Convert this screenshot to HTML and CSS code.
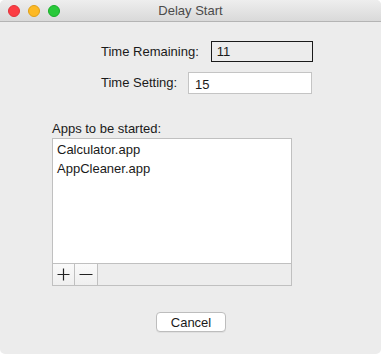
FILE: index.html
```html
<!DOCTYPE html>
<html>
<head>
<meta charset="utf-8">
<link rel="stylesheet" href="styles.css">
</head>
<body>
<div class="window">
  <div class="titlebar">
    <div class="lights">
      <span class="light red"></span>
      <span class="light yellow"></span>
      <span class="light green"></span>
    </div>
    <div class="title">Delay Start</div>
  </div>
  <div class="content">
    <div class="fields">
      <div class="row">
        <span class="label">Time Remaining:</span>
        <div class="field readonly">11</div>
      </div>
      <div class="row">
        <span class="label">Time Setting:</span>
        <div class="field editable">15</div>
      </div>
    </div>
    <div class="apps">
      <div class="apps-label">Apps to be started:</div>
      <div class="list">
        <div class="items">
          <div class="item">Calculator.app</div>
          <div class="item">AppCleaner.app</div>
        </div>
        <div class="toolbar">
          <button class="tbtn plus"><svg width="13" height="13" viewBox="0 0 13 13"><path d="M6.5 0.5v12M0.5 6.5h12" stroke="#222" stroke-width="1.2" fill="none"/></svg></button>
          <button class="tbtn minus"><svg width="14" height="13" viewBox="0 0 14 13"><path d="M0.5 6.5h13" stroke="#222" stroke-width="1.2" fill="none"/></svg></button>
          <div class="tfill"></div>
        </div>
      </div>
    </div>
    <div class="actions">
      <button class="cancel">Cancel</button>
    </div>
  </div>
</div>
</body>
</html>
```
FILE: styles.css
```css
html, body {
  margin: 0;
  padding: 0;
  background: #ffffff;
}
body {
  font-family: "Liberation Sans", Arial, sans-serif;
  font-size: 13px;
  color: #1a1a1a;
}
.window {
  width: 381px;
  height: 354px;
  background: #ececec;
  border-radius: 5px;
  overflow: hidden;
  display: flex;
  flex-direction: column;
}
.titlebar {
  height: 21px;
  border-bottom: 1px solid #b4b4b4;
  background: linear-gradient(#eeeeee, #d9d9d9);
  position: relative;
  display: flex;
  align-items: center;
  justify-content: center;
  flex-shrink: 0;
}
.lights {
  position: absolute;
  left: 8px;
  top: 5px;
  display: flex;
  gap: 8px;
}
.light {
  width: 12px;
  height: 12px;
  border-radius: 50%;
  box-sizing: border-box;
}
.red { background: #fc3d44; border: 1px solid #e0333a; }
.yellow { background: #fdb924; border: 1px solid #de9f17; }
.green { background: #29c93a; border: 1px solid #18ad29; }
.title {
  color: #4b4b4b;
  font-size: 13px;
  line-height: 21px;
}
.content {
  display: flex;
  flex-direction: column;
  padding-top: 19px;
}
.fields {
  padding-left: 101px;
  display: flex;
  flex-direction: column;
  gap: 10px;
}
.row {
  display: flex;
  align-items: center;
  gap: 11px;
}
.label {
  line-height: 16px;
}
.field {
  box-sizing: border-box;
  height: 21px;
  line-height: 19px;
  padding-left: 5px;
}
.readonly {
  width: 102px;
  border: 1px solid #1a1a1a;
  background: #ececec;
  margin-left: 1px;
}
.editable {
  width: 124px;
  height: 22px;
  line-height: 22px;
  border: 1px solid #c4c4c4;
  background: #ffffff;
  padding-left: 6px;
  padding-top: 1px;
}
.apps {
  padding-left: 52px;
  margin-top: 27px;
}
.apps-label {
  line-height: 16px;
  margin-bottom: 1px;
}
.list {
  width: 240px;
  height: 148px;
  box-sizing: border-box;
  border: 1px solid #c0c0c0;
  background: #ffffff;
  display: flex;
  flex-direction: column;
}
.items {
  flex: 1;
  padding-top: 1px;
  padding-left: 4px;
}
.item {
  line-height: 19px;
}
.toolbar {
  height: 21px;
  border-top: 1px solid #c0c0c0;
  background: #ededed;
  display: flex;
}
.tbtn {
  margin: 0;
  padding: 0;
  border: none;
  border-right: 1px solid #c0c0c0;
  background: linear-gradient(#fafafa, #efefef);
  display: flex;
  align-items: center;
  justify-content: center;
  height: 21px;
}
.plus { width: 22px; }
.minus { width: 23px; }
.tfill { flex: 1; }
.actions {
  display: flex;
  justify-content: center;
  margin-top: 26px;
}
.cancel {
  width: 70px;
  height: 20px;
  margin-left: 1px;
  padding: 0;
  border: 1px solid #bdbdbd;
  border-radius: 4px;
  background: #ffffff;
  font-family: "Liberation Sans", Arial, sans-serif;
  font-size: 13px;
  color: #1a1a1a;
  box-shadow: 0 1px 0 rgba(0,0,0,0.05);
}
```
